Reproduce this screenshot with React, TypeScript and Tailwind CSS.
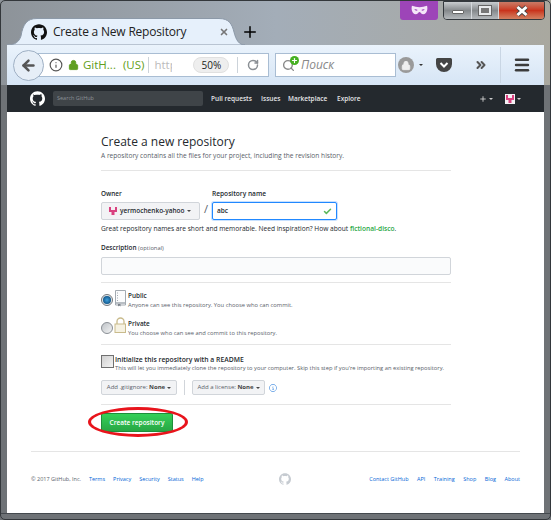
import { SiGithub } from "react-icons/si"
import { GoInfo } from "react-icons/go"
import { ArrowLeft, Check, Info, Lock, RotateCw, Search, Plus, X, ChevronsRight, Menu } from "lucide-react"

const font = "font-['Open_Sans',sans-serif]"

function Caret({ className = "" }: { className?: string }) {
  return <span className={`inline-block w-0 h-0 border-x-[2px] border-t-[2px] border-x-transparent border-t-current ${className}`} />
}

function Avatar({ size }: { size: string }) {
  return (
    <svg viewBox="0 0 10 10" className={size}>
      <rect width="10" height="10" fill="#f4f0f4" />
      <path d="M1 1h2v3h4V1h2v5H6.5v3h-3V6H1z" fill="#d9417f" />
    </svg>
  )
}

function Divider() {
  return <div className="h-px bg-[#e5e5e5] w-full" />
}

export default function App() {
  return (
    <div className={`relative w-[551px] h-[520px] overflow-hidden flex flex-col bg-gradient-to-r from-[#8d9399] via-[#a3adb8] to-[#a9a89f] ${font}`}>
      {/* title bar */}
      <div className="h-[45px] shrink-0 flex items-end pl-[7px]">
        <div className="relative w-[238px] h-[27px] flex items-center pl-[24px] pr-[16px]">
          <svg viewBox="0 0 238 27" className="absolute inset-0 w-[238px] h-[27px]">
            <path d="M0 27C8 27 12 24 14 18C16 6 20 0.5 30 0.5H212C222 0.5 225 6 227 14C229 22 232 27 238 27Z" fill="#e6f0fb" stroke="#8c99a8" />
          </svg>
          <SiGithub className="relative w-[16px] h-[16px] text-[#111] shrink-0" />
          <span className="relative ml-[6px] text-[12px] tracking-[-0.2px] text-[#222] flex-1 whitespace-nowrap">Create a New Repository</span>
          <X className="relative w-[10px] h-[10px] text-[#777]" strokeWidth={4} />
        </div>
        <Plus className="-ml-[4px] mb-[4px] w-[18px] h-[18px] text-black" strokeWidth={2} />
      </div>

      {/* private browsing badge */}
      <div className="absolute top-0 left-[400px] w-[38px] h-[20px] bg-[#9d45b8] rounded-b-[3px] flex items-center justify-center">
        <svg viewBox="0 0 18 10" className="w-[17px] h-[10px]">
          <path fillRule="evenodd" fill="#f4e6f8" d="M1 0.5C4 1.5 6 1.5 9 2C12 1.5 14 1.5 17 0.5C18 4 17 9 13 9.5C11 9.5 10 7 9 7C8 7 7 9.5 5 9.5C1 9 0 4 1 0.5ZM3.5 4.5C4.5 6 6.5 6 7 5C6 4 4.5 4 3.5 4.5ZM14.5 4.5C13.5 6 11.5 6 11 5C12 4 13.5 4 14.5 4.5Z" />
        </svg>
      </div>
      {/* window controls */}
      <div className="absolute top-[1px] left-[443px] w-[102px] h-[19px] rounded-b-[4px] border border-[#33383d] flex overflow-hidden">
        <div className="w-[28px] pt-[6px] bg-gradient-to-b from-[#c9cdd0] via-[#85898c] to-[#b5b9bc] flex items-start justify-center border-r border-[#d4d8dc]">
          <div className="mt-[2px] w-[12px] h-[4px] bg-white border border-[#666] rounded-[1px]" />
        </div>
        <div className="w-[27px] bg-gradient-to-b from-[#c9cdd0] via-[#85898c] to-[#b5b9bc] flex items-center justify-center border-r border-[#d4d8dc]">
          <div className="w-[12px] h-[9px] border-2 border-[#e8eaec] bg-[#777] shadow-[0_0_0_1px_#666]" />
        </div>
        <div className="flex-1 bg-gradient-to-b from-[#c87a66] via-[#c9331c] to-[#d27f60] flex items-center justify-center">
          <svg viewBox="0 0 14 12" className="w-[14px] h-[12px]">
            <path d="M2.5 2L11.5 10M11.5 2L2.5 10" stroke="#444" strokeWidth="4.5" />
            <path d="M2.5 2L11.5 10M11.5 2L2.5 10" stroke="#fff" strokeWidth="3" />
          </svg>
        </div>
      </div>

      {/* toolbar */}
      <div className="mx-[7px] h-[40px] shrink-0 bg-gradient-to-b from-[#eaf3fc] to-[#d6e5f5] flex items-center pl-[6px]">
        <div className="w-[31px] h-[31px] rounded-full bg-[#e6eef7] border border-[#9fb0c4] flex items-center justify-center z-10 shrink-0">
          <ArrowLeft className="w-[17px] h-[17px] text-[#555]" strokeWidth={3.5} />
        </div>
        <div className="-ml-[8px] w-[233px] h-[24px] bg-white border border-[#a9bdd3] flex items-center pl-[12px] shrink-0">
          <Info className="w-[14px] h-[14px] text-[#555] shrink-0" />
          <Lock className="ml-[5px] w-[11px] h-[12px] text-[#5f9e20] shrink-0" fill="#5f9e20" />
          <span className="ml-[4px] text-[11.5px] text-[#5f9e20] whitespace-nowrap">GitH...</span>
          <span className="ml-[7px] text-[11.5px] text-[#5f9e20] whitespace-nowrap">(US)</span>
          <div className="ml-[4px] w-px h-[16px] bg-[#ccd3da]" />
          <span className="ml-[5px] w-[18px] overflow-hidden text-[11.5px] text-[#bbb]">http</span>
          <div className="ml-[21px] w-[36px] h-[16px] rounded-full bg-[#eeeeee] border border-[#e0e0e0] flex items-center justify-center text-[10px] text-[#222]">50%</div>
          <div className="ml-[8px] w-px h-[16px] bg-[#ccd3da]" />
          <RotateCw className="ml-[9px] w-[12px] h-[12px] text-[#8a8f94]" strokeWidth={3} />
        </div>
        <div className="ml-[6px] w-[121px] h-[24px] bg-white border border-[#a9bdd3] flex items-center pl-[6px] shrink-0">
          <div className="relative w-[18px] h-[16px]">
            <Search className="w-[13px] h-[13px] text-[#888] absolute left-0 top-[2px]" strokeWidth={2.5} />
            <div className="absolute left-[8px] -top-[1px] w-[9px] h-[9px] rounded-full bg-[#45b020] flex items-center justify-center">
              <Plus className="w-[7px] h-[7px] text-white" strokeWidth={4} />
            </div>
          </div>
          <span className="ml-[1px] text-[12px] italic text-[#888]">Поиск</span>
        </div>
        <div className="ml-[2px] w-[16px] h-[16px] rounded-full bg-[#9a9a9a] flex items-center justify-center shrink-0">
          <Lock className="w-[10px] h-[11px] text-[#eee]" fill="#eee" />
        </div>
        <Caret className="ml-[5px] text-[#333]" />
        <svg viewBox="0 0 16 14" className="ml-[13px] w-[16px] h-[14px] shrink-0">
          <path d="M1.5 0h13A1.5 1.5 0 0 1 16 1.5V6a8 8 0 0 1-16 0V1.5A1.5 1.5 0 0 1 1.5 0z" fill="#444" />
          <path d="M4.5 5L8 8.5 11.5 5" fill="none" stroke="#fff" strokeWidth="2" />
        </svg>
        <ChevronsRight className="ml-[22px] w-[14px] h-[14px] text-[#555]" strokeWidth={3.5} />
        <div className="ml-[12px] w-px h-[36px] bg-[#c9d6e4]" />
        <Menu className="ml-[12px] w-[18px] h-[18px] text-[#3c3c3c]" strokeWidth={3.2} />
      </div>

      {/* page with window frame on the sides */}
      <div className="flex-1 min-h-0 flex flex-col border-x-[7px] border-[#6e7276]">
        {/* github header */}
        <div className="h-[27px] shrink-0 bg-[#24292e] flex items-center pl-[23px]">
          <SiGithub className="w-[15px] h-[15px] text-white shrink-0" />
          <div className="ml-[8px] w-[150px] h-[15px] rounded-[2px] bg-[#3f4448] flex items-center pl-[4px] text-[5.5px] text-[#8d9298]">Search GitHub</div>
          <div className="ml-[8px] flex items-center text-[6.5px] font-semibold text-[#e4e6e8] whitespace-nowrap">
            <span className="w-[50px]">Pull requests</span>
            <span className="w-[27px]">Issues</span>
            <span className="w-[49px]">Marketplace</span>
            <span>Explore</span>
          </div>
          <Plus className="ml-[118px] w-[8px] h-[8px] text-[#ddd]" strokeWidth={2.5} />
          <Caret className="ml-[2px] text-[#ccc]" />
          <div className="ml-[12px]"><Avatar size="w-[10px] h-[10px]" /></div>
          <Caret className="ml-[2px] text-[#ccc]" />
        </div>

        {/* page */}
        <div className="flex-1 bg-white min-h-0 flex flex-col">
          <div className="ml-[94px] w-[350px] pt-[22px] flex flex-col">
            <div className="text-[12px] leading-[16px] text-[#24292e]">Create a new repository</div>
            <div className="mt-[1px] text-[6.6px] leading-[9px] text-[#586069] whitespace-nowrap">A repository contains all the files for your project, including the revision history.</div>
            <div className="mt-[10px]"><Divider /></div>

            <div className="mt-[18px] flex items-start">
              <div className="w-[99px] shrink-0">
                <div className="text-[6.4px] leading-[9px] font-semibold text-[#24292e]">Owner</div>
                <div className="mt-[4px] h-[18px] rounded-[2px] border border-[#d1d5da] bg-[#f2f3f5] flex items-center pl-[6px]">
                  <Avatar size="w-[10px] h-[10px]" />
                  <span className="ml-[2px] text-[6.5px] font-semibold text-[#24292e] whitespace-nowrap">yermochenko-yahoo</span>
                  <Caret className="ml-[2px] text-[#444]" />
                </div>
              </div>
              <span className="w-[12px] mt-[13px] text-center text-[11px] leading-[14px] text-[#586069] shrink-0">/</span>
              <div className="w-[125px] shrink-0">
                <div className="text-[6.6px] leading-[9px] font-semibold text-[#24292e] whitespace-nowrap">Repository name</div>
                <div className="mt-[4px] h-[18px] rounded-[2px] border border-[#2188ff] shadow-[0_0_0_1px_#c8e1ff] bg-white flex items-center justify-between pl-[4px] pr-[4px]">
                  <span className="text-[6.5px] font-semibold text-[#24292e]">abc</span>
                  <Check className="w-[9px] h-[9px] text-[#5cb85c]" strokeWidth={4} />
                </div>
              </div>
            </div>

            <div className="mt-[4px] text-[6.63px] leading-[10px] text-[#24292e] whitespace-nowrap">
              Great repository names are short and memorable. Need inspiration? How about <span className="text-[#28a745] font-semibold">fictional-disco</span>.
            </div>

            <div className="mt-[9px] text-[6.4px] leading-[9px] font-semibold text-[#24292e]">
              Description <span className="font-normal text-[5.8px] text-[#586069]">(optional)</span>
            </div>
            <div className="mt-[4px] h-[18px] rounded-[2px] border border-[#d1d5da] bg-[#fafbfc]" />
            <div className="mt-[7px]"><Divider /></div>

            <div className="mt-[8px] flex items-start h-[21px]">
              <div className="mt-[3px] w-[12px] h-[12px] rounded-full border border-[#73787d] bg-[#e3e7ea] flex items-center justify-center shrink-0">
                <div className="w-[8px] h-[8px] rounded-full bg-[radial-gradient(circle,#3fa0dd_0%,#14598c_70%,#0d3f66_100%)]" />
              </div>
              <svg viewBox="0 0 12 17" className="-mt-[1px] ml-[1px] w-[12px] h-[17px] shrink-0">
                <path d="M1.5 0.5H11.5V13H1.5ZM1.5 13H11.5V15H1.5Z" fill="#fbfcfd" stroke="#a3aab1" />
                <path d="M3 3H4M3 5.5H4M3 8H4M3 10.5H4" stroke="#a3aab1" />
                <path d="M4 14H6.5V16.5L5.2 15.5L4 16.5Z" fill="#7b828a" />
              </svg>
              <div className="ml-[2px]">
                <div className="text-[6.4px] leading-[9px] font-semibold text-[#24292e]">Public</div>
                <div className="mt-[1px] text-[5.8px] leading-[9px] text-[#586069] whitespace-nowrap">Anyone can see this repository. You choose who can commit.</div>
              </div>
            </div>
            <div className="mt-[7px] flex items-start h-[21px]">
              <div className="mt-[3px] w-[12px] h-[12px] rounded-full border border-[#8a8f95] bg-gradient-to-br from-[#bfc3c7] to-[#f3f4f5] shrink-0" />
              <svg viewBox="0 0 12 16" className="-mt-[2px] ml-[1px] w-[12px] h-[16px] shrink-0">
                <path d="M3 7V4.5a3.5 3.5 0 0 1 7 0V7" fill="none" stroke="#c9bb8c" strokeWidth="1.3" />
                <rect x="1" y="7" width="10.5" height="8.5" fill="#f6f2e2" stroke="#c9bb8c" />
              </svg>
              <div className="ml-[2px]">
                <div className="text-[6.4px] leading-[9px] font-semibold text-[#24292e]">Private</div>
                <div className="mt-[1px] text-[5.8px] leading-[9px] text-[#586069] whitespace-nowrap">You choose who can see and commit to this repository.</div>
              </div>
            </div>
            <div className="mt-[4px]"><Divider /></div>

            <div className="mt-[10px] flex items-start h-[20px]">
              <div className="w-[13px] h-[13px] border border-[#707070] bg-gradient-to-br from-[#d0d0d0] to-[#f4f4f4] shrink-0" />
              <div className="ml-px">
                <div className="text-[6.8px] leading-[9px] font-semibold text-[#24292e] whitespace-nowrap">Initialize this repository with a README</div>
                <div className="text-[5.76px] leading-[9px] text-[#586069] whitespace-nowrap">This will let you immediately clone the repository to your computer. Skip this step if you're importing an existing repository.</div>
              </div>
            </div>

            <div className="mt-[5px] flex items-center h-[15px]">
              <div className="w-[76px] h-[15px] rounded-[2px] border border-[#d1d5da] bg-[#f2f3f5] flex items-center justify-center text-[6px] text-[#586069] whitespace-nowrap">
                Add .gitignore:&nbsp;<span className="font-bold text-[#444]">None</span><Caret className="ml-[2px] text-[#444]" />
              </div>
              <div className="ml-[7px] w-px h-[15px] bg-[#d1d5da]" />
              <div className="ml-[7px] w-[73px] h-[15px] rounded-[2px] border border-[#d1d5da] bg-[#f2f3f5] flex items-center justify-center text-[6px] text-[#586069] whitespace-nowrap">
                Add a license:&nbsp;<span className="font-bold text-[#444]">None</span><Caret className="ml-[2px] text-[#444]" />
              </div>
              <GoInfo className="ml-[4px] w-[8px] h-[8px] text-[#0366d6]" />
            </div>
            <div className="mt-[9px]"><Divider /></div>

            <div className="mt-[8px] relative w-[72px] h-[19px] rounded-[2px] border border-[#1e8e3a] bg-gradient-to-b from-[#34d058] to-[#28a745] flex items-center justify-center text-[6.5px] font-semibold text-white whitespace-nowrap">
              Create repository
              {/* red annotation circle */}
              <div className="absolute -left-[14px] -top-[7px] w-[100px] h-[30px] rounded-[50%] border-[3px] border-[#e8141c]" />
            </div>
          </div>

          {/* footer */}
          <div className="ml-[24px] w-[489px] mt-[19px]">
            <Divider />
            <div className="mt-[21px] flex items-center text-[5.5px] leading-[9px] whitespace-nowrap text-[#0366d6]">
              <div className="w-[248px] flex items-center">
                <span className="text-[#586069]">© 2017 GitHub, Inc.</span>
                <span className="ml-[8px]">Terms</span>
                <span className="ml-[8px]">Privacy</span>
                <span className="ml-[8px]">Security</span>
                <span className="ml-[8px]">Status</span>
                <span className="ml-[8px]">Help</span>
              </div>
              <SiGithub className="w-[12px] h-[12px] text-[#c6cbd1]" />
              <div className="flex-1 flex items-center justify-end">
                <span>Contact GitHub</span>
                <span className="ml-[8.5px]">API</span>
                <span className="ml-[8.5px]">Training</span>
                <span className="ml-[8.5px]">Shop</span>
                <span className="ml-[8.5px]">Blog</span>
                <span className="ml-[8.5px]">About</span>
              </div>
            </div>
          </div>
        </div>
      </div>
      {/* bottom frame */}
      <div className="h-[7px] shrink-0 bg-[#6e7276] border-t border-[#44494e]" />
      {/* window outline */}
      <div className="absolute inset-0 rounded-[5px] border border-[#33373b] pointer-events-none" />
    </div>
  )
}
